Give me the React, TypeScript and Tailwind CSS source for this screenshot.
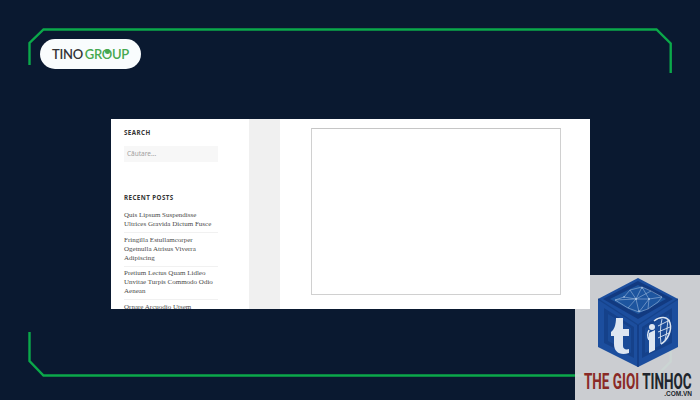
import React from "react";

const posts = [
  ["Quis Lipsum Suspendisse", "Ultrices Gravida Dictum Fusce"],
  ["Fringilla Estullamcorper", "Ogetnulla Atrisus Viverra", "Adipiscing"],
  ["Pretium Lectus Quam Lidleo", "Unvitae Turpis Commodo Odio", "Aenean"],
  ["Ornare Arcuodio Utsem"],
];

function Frame() {
  return (
    <svg className="absolute inset-0" width="700" height="400" fill="none" stroke="#0ba84a" strokeWidth="2.4">
      <path d="M29.5 65V43L43.5 29.5H656.5L670.7 43.5V73" />
      <path d="M29.5 332V361L43.5 375.5H657L670.7 361.5V350" />
    </svg>
  );
}

function Cube() {
  return (
    <svg width="80" height="89" viewBox="0 0 80 89" className="block">
      <polygon points="40,0 80,21 80,69 40,89 0,69 0,21" fill="#1c4e9e" />
      <polygon points="40,3 75,21 40,41 5,21" fill="#123a80" />
      <polygon points="40,7 68,21 40,36 12,21" fill="#1d559f" />
      <path d="M0 21L40 47L80 21" fill="none" stroke="#16438c" strokeWidth="1.4" />
      <path d="M40 47V89" stroke="#123a80" strokeWidth="1.4" />
      <polygon points="6,30 36,49 36,80 6,65" fill="#15418a" />
      <polygon points="44,49 74,30 74,65 44,80" fill="#15418a" />
      <polygon points="10,36 33,50 33,75 10,63" fill="#1a4b98" />
      <polygon points="47,50 71,36 71,63 47,75" fill="#1a4b98" />
      <g stroke="#b4cbe8" strokeWidth="0.55" fill="none" opacity="0.9">
        <path d="M17 22L26 19L32 12L44 9L53 13L64 19L60 24L50 31L41 34L30 30Z" />
        <path d="M26 19L38 21L44 9M38 21L53 13M38 21L51 21L64 19M38 21L30 30M38 21L41 34M51 21L50 31M51 21L44 9M17 22L38 21M32 12L38 21M51 21L41 34" />
      </g>
      <g fill="#b4cbe8">
        <circle cx="38" cy="21" r="1" />
        <circle cx="51" cy="21" r="1" />
        <circle cx="44" cy="10" r="0.8" />
        <circle cx="26" cy="19" r="0.8" />
        <circle cx="41" cy="33" r="0.8" />
      </g>
      <path
        d="M18 40h7v11h6v7h-6v10c0 3 3 4 6 3v4c-9 3-15-1-15-9V58h-3v-4c3-2 5-7 5-14Z"
        fill="#dde6f1"
      />
      <g fill="#dde6f1">
        <circle cx="54" cy="49" r="3" />
        <path d="M51 55l6-3v20l-6 3Z" />
      </g>
      <g stroke="#dde6f1" fill="none">
        <path d="M56 43c6-5 14-5 16 2c2 7-2 17-9 21" strokeWidth="1.5" />
        <path d="M51 62c-2-4-1-8 0-10" strokeWidth="1.5" />
        <path d="M60 48l12-6M60 54l12-5M60 60l11-5M64 41c-2 8-2 17-1 25M70 42c-1 7-1 13-3 20" strokeWidth="0.9" />
      </g>
    </svg>
  );
}

export default function App() {
  return (
    <div className="relative w-[700px] h-[400px] overflow-hidden bg-[#0a1930] font-['Liberation_Sans',sans-serif]">
      <Frame />
      <div className="relative pt-[39px] pl-10">
        <div className="flex items-center justify-center w-[101px] h-[30px] rounded-[15px] bg-[#f9fcfd] text-[13px] font-semibold tracking-[-0.3px] leading-none font-['Lato',sans-serif]">
          <span className="text-[#333336] mr-[2px]">TINO</span>
          <span className="text-[#46a84f]">
            GR
            <span className="relative">
              O
              <span className="absolute left-[3px] top-[3px] w-[5px] h-[5px] rounded-full bg-[#46a84f]" />
            </span>
            UP
          </span>
        </div>
      </div>
      <div className="absolute right-0 bottom-0 w-[125px] h-[125px] bg-[#d6d7da]/95 flex flex-col items-center pt-[3px]">
        <Cube />
        <div className="mt-[6px] font-['Roboto',sans-serif] text-[22.5px] leading-[16px] font-bold whitespace-nowrap scale-x-[0.6]">
          <span className="text-[#8a2a26]">THE GIOI </span>
          <span className="text-[#20252c]">TINHOC</span>
        </div>
        <div className="self-end mt-[1px] mr-[8px] text-[6.5px] leading-[7px] font-bold text-[#20252c]">.COM.VN</div>
      </div>
      <div className="relative mt-[50px] ml-[111px] flex w-[479px] h-[190px] overflow-hidden bg-white">
        <div className="w-[138px] shrink-0 pt-[9px] pl-[13px] pr-[31px] font-['Noto_Sans',sans-serif]">
          <h2 className="text-[6.2px] leading-[9px] font-bold tracking-[0.45px] text-[#333333]">SEARCH</h2>
          <div className="mt-[9px] h-4 flex items-center px-[3px] bg-[#f7f7f7] text-[6.5px] text-[#a0a0a0]">Căutare...</div>
          <h2 className="mt-[31px] text-[6.2px] leading-[9px] font-bold tracking-[0.45px] text-[#333333]">RECENT POSTS</h2>
          <ul className="mt-[9px] font-['Liberation_Serif',serif] text-[7px] leading-[9px] text-[#4a4a4a]">
            {posts.map((lines, i) => (
              <li key={i} className="pb-[3px] mb-[2.5px] border-b border-[#f1f1f1] last:border-b-0 whitespace-nowrap">
                {lines.map((l) => (
                  <div key={l}>{l}</div>
                ))}
              </li>
            ))}
          </ul>
        </div>
        <div className="w-[31px] shrink-0 bg-[#f0f0f0]" />
        <div className="flex-1 pt-[9px] pl-[31px] pr-[29px] pb-[14px]">
          <div className="h-full border border-[#d0d0d0] border-t-[#c6c6c6] bg-white" />
        </div>
      </div>
    </div>
  );
}
